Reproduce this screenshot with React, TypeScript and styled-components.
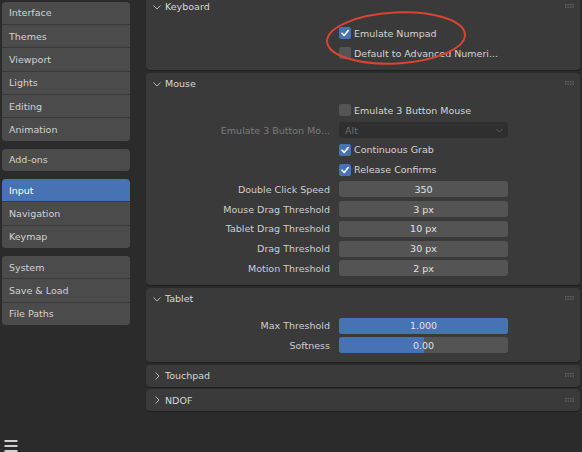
import React from 'react';
import styled, { createGlobalStyle } from 'styled-components';

const GlobalStyle = createGlobalStyle`
  html, body {
    margin: 0;
    padding: 0;
    background: #2b2b2b;
  }
  body {
    font-family: 'DejaVu Sans', 'Liberation Sans', sans-serif;
    font-size: 9.5px;
    color: #d0d0d0;
  }
`;

const Window = styled.div`
  position: relative;
  display: flex;
  width: 582px;
  height: 452px;
  overflow: hidden;
  background: #2b2b2b;
`;

const Nav = styled.nav`
  display: flex;
  flex-direction: column;
  gap: 8px;
  width: 144px;
  padding: 1.7px 0 0 2px;
  box-sizing: border-box;
`;

const NavGroup = styled.div`
  display: flex;
  flex-direction: column;
  width: 128px;
  border-radius: 4px;
  overflow: hidden;
  background: #3a3a3a;
  gap: 1px;
`;

const NavItem = styled.div<{ $active?: boolean }>`
  display: flex;
  align-items: center;
  height: 22.33px;
  padding-left: 7px;
  background: ${(p) => (p.$active ? '#4772b3' : '#4b4b4b')};
  color: ${(p) => (p.$active ? '#ffffff' : '#d2d2d2')};
`;

const MenuButton = styled.div`
  margin-top: auto;
  margin-bottom: -3px;
  width: 16px;
  height: 16px;
  display: flex;
  align-items: flex-start;
  justify-content: center;
  margin-left: 1px;
`;

const Main = styled.main`
  flex: 1;
  display: flex;
  flex-direction: column;
  gap: 2.5px;
  padding: 0 2px 0 2px;
  margin-top: -4.5px;
`;

const PanelBox = styled.section`
  background: #3a3a3a;
  border-radius: 4px;
  box-shadow: 0 1px 0 rgba(0, 0, 0, 0.25);
`;

const PanelHeader = styled.div`
  display: flex;
  align-items: center;
  height: 22px;
  padding: 0 5px 0 7px;
  color: #d8d8d8;
`;

const HeaderTitle = styled.span`
  flex: 1;
  margin-left: 4px;
`;

const PanelBody = styled.div`
  padding: 6px 0 7px 0;
`;

const Row = styled.div`
  display: grid;
  grid-template-columns: 184px 169px;
  column-gap: 9px;
  height: 19.75px;
  align-items: center;
`;

const Label = styled.span<{ $dim?: boolean }>`
  text-align: right;
  white-space: nowrap;
  color: ${(p) => (p.$dim ? '#7a7a7a' : '#cecece')};
`;

const Field = styled.div`
  position: relative;
  height: 16px;
  border-radius: 3px;
  background: #545454;
  overflow: hidden;
  display: flex;
  align-items: center;
  justify-content: center;
  color: #e2e2e2;
`;

const SliderFill = styled.div`
  position: absolute;
  left: 0;
  top: 0;
  bottom: 0;
  background: #4772b3;
`;

const FieldText = styled.span`
  position: relative;
`;

const Dropdown = styled.div`
  height: 16px;
  border-radius: 3px;
  background: #2f2f2f;
  display: flex;
  align-items: center;
  justify-content: space-between;
  padding: 0 5px 0 6px;
  color: #6e6e6e;
`;

const CheckLine = styled.label`
  grid-column: 2 / span 2;
  display: flex;
  align-items: center;
  gap: 3px;
  white-space: nowrap;
  color: #d4d4d4;
`;

const Box = styled.span<{ $on?: boolean }>`
  display: inline-flex;
  align-items: center;
  justify-content: center;
  width: 12px;
  height: 12px;
  border-radius: 2px;
  background: ${(p) => (p.$on ? '#4772b3' : '#545454')};
`;

const Annotation = styled.svg`
  position: absolute;
  left: 323px;
  top: 9px;
  pointer-events: none;
`;

const Chevron = ({ open }: { open: boolean }) =>
  open ? (
    <svg width="8" height="8" viewBox="0 0 8 8">
      <polyline points="0.5,2.5 4,6 7.5,2.5" fill="none" stroke="#b4b4b4" strokeWidth="1" />
    </svg>
  ) : (
    <svg width="8" height="8" viewBox="0 0 8 8">
      <polyline points="2.5,0.5 6,4 2.5,7.5" fill="none" stroke="#b4b4b4" strokeWidth="1" />
    </svg>
  );

const Grip = () => (
  <svg width="10" height="5" viewBox="0 0 10 5">
    {[0, 1, 2, 3].map((i) =>
      [0, 1].map((j) => (
        <rect key={`${i}-${j}`} x={i * 2.5} y={j * 2.5} width="1.3" height="1.3" fill="#6a6a6a" />
      ))
    )}
  </svg>
);

const Tick = () => (
  <svg width="10" height="10" viewBox="0 0 10 10">
    <polyline points="2,5.2 4.2,7.4 8.2,2.6" fill="none" stroke="#ffffff" strokeWidth="1.6" strokeLinecap="round" strokeLinejoin="round" />
  </svg>
);

function Panel({ title, open = true, children }: { title: string; open?: boolean; children?: React.ReactNode }) {
  return (
    <PanelBox>
      <PanelHeader>
        <Chevron open={open} />
        <HeaderTitle>{title}</HeaderTitle>
        <Grip />
      </PanelHeader>
      {open && <PanelBody>{children}</PanelBody>}
    </PanelBox>
  );
}

function CheckRow({ text, on }: { text: string; on?: boolean }) {
  return (
    <Row>
      <CheckLine>
        <Box $on={on}>{on && <Tick />}</Box>
        {text}
      </CheckLine>
    </Row>
  );
}

function NumberRow({ label, value, fill }: { label: string; value: string; fill?: number }) {
  return (
    <Row>
      <Label>{label}</Label>
      <Field>
        {fill !== undefined && <SliderFill style={{ width: `${fill * 100}%` }} />}
        <FieldText>{value}</FieldText>
      </Field>
    </Row>
  );
}

const navGroups = [
  ['Interface', 'Themes', 'Viewport', 'Lights', 'Editing', 'Animation'],
  ['Add-ons'],
  ['Input', 'Navigation', 'Keymap'],
  ['System', 'Save & Load', 'File Paths'],
];

export default function App() {
  return (
    <>
      <GlobalStyle />
      <Window>
        <Nav>
          {navGroups.map((group, gi) => (
            <NavGroup key={gi}>
              {group.map((name) => (
                <NavItem key={name} $active={name === 'Input'}>
                  {name}
                </NavItem>
              ))}
            </NavGroup>
          ))}
          <MenuButton>
            <svg width="14" height="14" viewBox="0 0 14 14">
              <rect x="0.5" y="1" width="13" height="2" rx="0.5" fill="#d0d0d0" />
              <rect x="0.5" y="6" width="13" height="2" rx="0.5" fill="#d0d0d0" />
              <rect x="0.5" y="11" width="13" height="2" rx="0.5" fill="#d0d0d0" />
            </svg>
          </MenuButton>
        </Nav>

        <Main>
          <Panel title="Keyboard">
            <CheckRow text="Emulate Numpad" on />
            <CheckRow text="Default to Advanced Numeri..." />
          </Panel>

          <Panel title="Mouse">
            <CheckRow text="Emulate 3 Button Mouse" />
            <Row>
              <Label $dim>Emulate 3 Button Mo...</Label>
              <Dropdown>
                <span>Alt</span>
                <svg width="7" height="5" viewBox="0 0 7 5">
                  <polyline points="0.5,1 3.5,4 6.5,1" fill="none" stroke="#5e5e5e" strokeWidth="1" />
                </svg>
              </Dropdown>
            </Row>
            <CheckRow text="Continuous Grab" on />
            <CheckRow text="Release Confirms" on />
            <NumberRow label="Double Click Speed" value="350" />
            <NumberRow label="Mouse Drag Threshold" value="3 px" />
            <NumberRow label="Tablet Drag Threshold" value="10 px" />
            <NumberRow label="Drag Threshold" value="30 px" />
            <NumberRow label="Motion Threshold" value="2 px" />
          </Panel>

          <Panel title="Tablet">
            <NumberRow label="Max Threshold" value="1.000" fill={1} />
            <NumberRow label="Softness" value="0.00" fill={0.5} />
          </Panel>

          <Panel title="Touchpad" open={false} />
          <Panel title="NDOF" open={false} />
        </Main>

        <Annotation width="146" height="62" viewBox="0 0 146 62">
          <ellipse cx="73" cy="29" rx="69" ry="25.5" fill="none" stroke="#d9452f" strokeWidth="2" transform="rotate(-3 73 29)" />
        </Annotation>
      </Window>
    </>
  );
}
